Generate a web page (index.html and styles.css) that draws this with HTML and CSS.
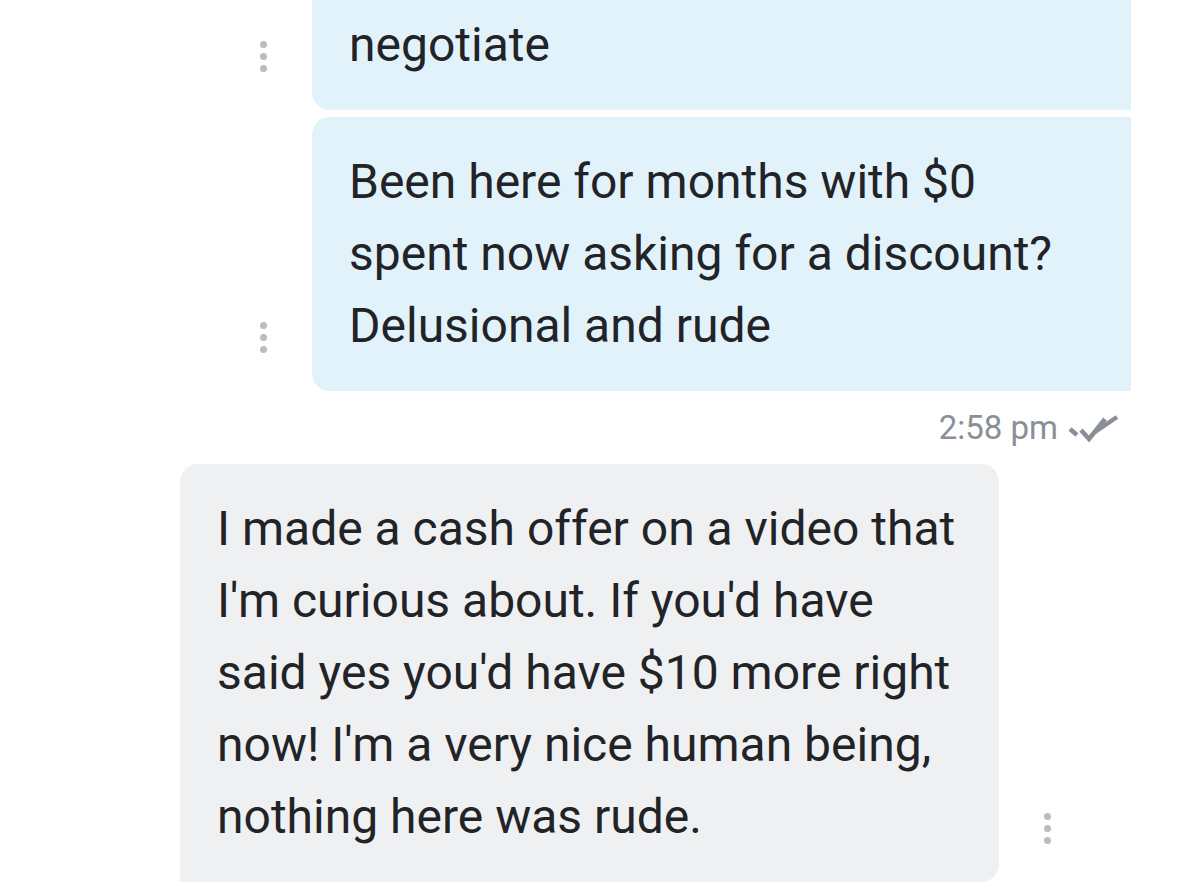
FILE: index.html
```html
<!DOCTYPE html>
<html lang="en">
<head>
    <meta charset="UTF-8">
    <meta name="viewport" content="width=device-width, initial-scale=1.0">
    <title>Chat</title>
    <link rel="stylesheet" href="styles.css">
</head>
<body>
    <div class="chat">
        <div class="row out">
            <span class="more"><i></i><i></i><i></i></span>
            <div class="bubble sent">negotiate</div>
        </div>

        <div class="row out">
            <span class="more"><i></i><i></i><i></i></span>
            <div class="bubble sent">Been here for months with $0<br>spent now asking for a discount?<br>Delusional and rude</div>
        </div>

        <div class="meta">
            <span>2:58 pm</span>
            <!-- double tick (read) -->
            <svg class="ticks" width="58" height="32" viewBox="0 0 58 32">
                <line x1="6" y1="17" x2="13" y2="23" />
                <polyline points="17,18 25,27 41,7" />
                <line x1="31" y1="20" x2="53" y2="5" />
            </svg>
        </div>

        <div class="row in">
            <div class="bubble recv">I made a cash offer on a video that<br>I'm curious about. If you'd have<br>said yes you'd have $10 more right<br>now! I'm a very nice human being,<br>nothing here was rude.</div>
            <span class="more"><i></i><i></i><i></i></span>
        </div>
    </div>
</body>
</html>
```

FILE: styles.css
```css
body {
    margin: 0;
    background-color: #fff;
    font-family: Roboto, "Noto Sans", sans-serif;
    color: #222327;
    height: 892px;
    overflow: hidden;
}
.chat {
    display: flex;
    flex-direction: column;
    margin-top: -20px;
}
.row {
    display: flex;
    align-items: flex-end;
    gap: 45px;
}
.out {
    justify-content: flex-end;
    padding-right: 48px;
}
.out + .out {
    margin-top: 7px;
}
.in {
    padding-left: 180px;
}
.bubble {
    width: 819px;
    box-sizing: border-box;
    padding: 29px 37px;
    font-size: 48px;
    line-height: 72px;
    white-space: nowrap;
}
.sent {
    background-color: #e1f2fa;
    border-radius: 18px 0 0 18px;
}
.recv {
    background-color: #eff0f2;
    border-radius: 18px 18px 18px 0;
}
.more {
    display: flex;
    flex-direction: column;
    gap: 5px;
    margin-bottom: 38px;
}
.more i {
    display: block;
    width: 7px;
    height: 7px;
    border-radius: 50%;
    background-color: #b9bcc2;
}
.meta {
    display: flex;
    justify-content: flex-end;
    align-items: center;
    gap: 6px;
    height: 73px;
    padding-right: 57px;
    font-size: 33px;
    color: #8a8f97;
}
.ticks {
    flex-shrink: 0;
}
.ticks line,
.ticks polyline {
    fill: none;
    stroke: #8a8f97;
    stroke-width: 4.5;
}
```
